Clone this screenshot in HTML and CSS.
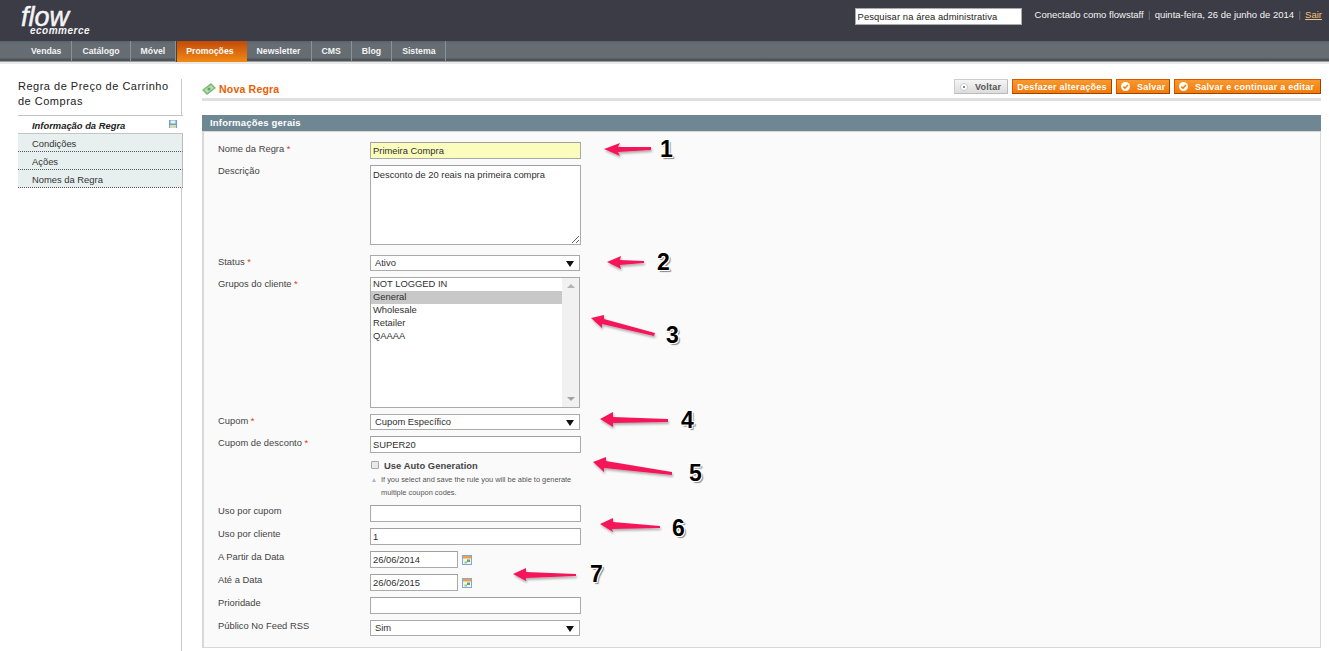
FILE: index.html
```html
<!DOCTYPE html>
<html lang="pt">
<head>
<meta charset="utf-8">
<title>Nova Regra</title>
<link rel="stylesheet" href="styles.css">
</head>
<body>
<header class="top">
  <div class="logo"><span class="logo-flow">flow</span><span class="logo-sub">ecommerce</span></div>
  <div class="top-right">
    <input class="search" type="text" value="Pesquisar na área administrativa">
    <div class="user">Conectado como flowstaff<i>|</i>quinta-feira, 26 de junho de 2014<i>|</i><a href="#">Sair</a></div>
  </div>
</header>
<nav class="nav">
  <a class="nav-item" href="#">Vendas</a>
  <a class="nav-item" href="#">Catálogo</a>
  <a class="nav-item" href="#">Móvel</a>
  <a class="nav-item active" href="#">Promoções</a>
  <a class="nav-item" href="#">Newsletter</a>
  <a class="nav-item" href="#">CMS</a>
  <a class="nav-item" href="#">Blog</a>
  <a class="nav-item" href="#">Sistema</a>
</nav>
<div class="page">
  <aside class="side">
    <h3 class="side-title">Regra de Preço de Carrinho de Compras</h3>
    <ul class="tabs">
      <li class="tab current">Informação da Regra
        <svg class="tab-icon" viewBox="0 0 8 8" width="8" height="8"><rect width="8" height="8" fill="#6f9fd8"/><rect x="1.5" y="0.5" width="5" height="3" fill="#e8f0f8"/><rect x="1" y="5" width="6" height="3" fill="#cfe0a8"/></svg>
      </li>
      <li class="tab">Condições</li>
      <li class="tab">Ações</li>
      <li class="tab">Nomes da Regra</li>
    </ul>
  </aside>
  <main class="main">
    <div class="head">
      <h3 class="head-title">
        <svg class="head-icon" viewBox="0 0 14 12" width="14" height="12"><path d="M0 7 9 0l5 5-9 7z" fill="#7fb77a"/><path d="M2 7 9 2l3 3-7 5z" fill="#b4dbab"/><circle cx="7" cy="6" r="1.5" fill="#6aa165"/></svg>
        Nova Regra
      </h3>
      <div class="actions">
        <button class="btn back" type="button"><span class="ico-back"></span>Voltar</button>
        <button class="btn plain" type="button">Desfazer alterações</button>
        <button class="btn save" type="button"><span class="ico-ok"><svg viewBox="0 0 9 9" width="9" height="9"><path d="M2.3 4.6 4 6.2 6.9 2.9" fill="none" stroke="#f18200" stroke-width="1.5"/></svg></span>Salvar</button>
        <button class="btn wide" type="button"><span class="ico-ok"><svg viewBox="0 0 9 9" width="9" height="9"><path d="M2.3 4.6 4 6.2 6.9 2.9" fill="none" stroke="#f18200" stroke-width="1.5"/></svg></span>Salvar e continuar a editar</button>
      </div>
    </div>
    <h4 class="sec-head">Informações gerais</h4>
    <form class="fieldset">
      <div class="row"><label class="must">Nome da Regra <b>*</b></label><input class="inp req" type="text" value="Primeira Compra"></div>
      <div class="row"><label>Descrição</label><textarea class="area">Desconto de 20 reais na primeira compra</textarea></div>
      <div class="row status"><label class="must">Status <b>*</b></label><div class="sel">Ativo</div></div>
      <div class="row"><label class="must">Grupos do cliente <b>*</b></label>
        <div class="multi">
          <ul class="opts">
            <li>NOT LOGGED IN</li>
            <li class="picked">General</li>
            <li>Wholesale</li>
            <li>Retailer</li>
            <li>QAAAA</li>
          </ul>
          <div class="scroll"><span class="up"></span><span class="down"></span></div>
        </div>
      </div>
      <div class="row"><label class="must">Cupom <b>*</b></label><div class="sel">Cupom Específico</div></div>
      <div class="row"><label class="must">Cupom de desconto <b>*</b></label><input class="inp" type="text" value="SUPER20"></div>
      <div class="auto">
        <div class="auto-check"><input class="chk" type="checkbox"><strong>Use Auto Generation</strong></div>
        <p class="note">If you select and save the rule you will be able to generate multiple coupon codes.</p>
      </div>
      <div class="row"><label>Uso por cupom</label><input class="inp" type="text"></div>
      <div class="row"><label>Uso por cliente</label><input class="inp" type="text" value="1"></div>
      <div class="row"><label>A Partir da Data</label><input class="inp date" type="text" value="26/06/2014">
        <svg class="cal" viewBox="0 0 10 10" width="10" height="10"><rect x=".5" y=".5" width="9" height="9" fill="#eef4fa" stroke="#7fa8d8"/><rect x="1" y="1" width="8" height="2.5" fill="#f0a040"/><rect x="5" y="4.5" width="3" height="2.5" fill="#6aa84f"/><rect x="2.5" y="6.5" width="2.5" height="2" fill="#9cc48a"/></svg>
      </div>
      <div class="row"><label>Até a Data</label><input class="inp date" type="text" value="26/06/2015">
        <svg class="cal" viewBox="0 0 10 10" width="10" height="10"><rect x=".5" y=".5" width="9" height="9" fill="#eef4fa" stroke="#7fa8d8"/><rect x="1" y="1" width="8" height="2.5" fill="#f0a040"/><rect x="5" y="4.5" width="3" height="2.5" fill="#6aa84f"/><rect x="2.5" y="6.5" width="2.5" height="2" fill="#9cc48a"/></svg>
      </div>
      <div class="row"><label>Prioridade</label><input class="inp" type="text"></div>
      <div class="row"><label>Público No Feed RSS</label><div class="sel">Sim</div></div>
    </form>
  </main>
</div>
<svg class="arrows" width="1329" height="651" viewBox="0 0 1329 651">
  <defs><filter id="sh" x="-20%" y="-50%" width="140%" height="200%"><feDropShadow dx="1" dy="2" stdDeviation="1" flood-color="#000" flood-opacity=".3"/></filter></defs>
  <g fill="#f5185a" filter="url(#sh)">
    <path d="M604 149 620 143 618 147 651 147 651 150 618 152 620 156z"/>
    <path d="M607 262 621 256 620 260 644 261 644 263 620 265 621 269z"/>
    <path d="M591 318 604 315 604 319 655 333 654 336 602 324 602 328z"/>
    <path d="M600 419 613 412 613 417 668 419 668 422 613 423 613 427z"/>
    <path d="M593 462 606 457 606 461 672 472 672 475 604 468 604 472z"/>
    <path d="M600 524 613 518 613 522 660 526 660 528 612 529 613 532z"/>
    <path d="M513 574 526 568 526 572 576 574 576 576 526 578 526 581z"/>
  </g>
</svg>
<span class="num n1">1</span>
<span class="num n2">2</span>
<span class="num n3">3</span>
<span class="num n4">4</span>
<span class="num n5">5</span>
<span class="num n6">6</span>
<span class="num n7">7</span>
</body>
</html>
```
FILE: styles.css
```css
* { box-sizing: border-box; }
html, body { margin: 0; padding: 0; overflow: hidden; }
body {
  position: relative;
  height: 651px;
  background: #fff;
  color: #2f2f2f;
  font-family: "Liberation Sans", Arial, sans-serif;
  font-size: 9.4px;
}
ul { list-style: none; margin: 0; padding: 0; }
h3, h4, p { margin: 0; }

.top {
  height: 41px;
  background: #3b3c46;
  display: flex;
  justify-content: space-between;
  padding-left: 21px;
  padding-right: 7px;
}
.logo { display: flex; flex-direction: column; width: 70px; color: #f4f4f4; font-style: italic; }
.logo-flow { height: 20px; font-size: 27px; line-height: 20px; margin-top: 7px; -webkit-text-stroke: .5px #f4f4f4; }
.logo-sub { font-size: 10px; line-height: 8px; font-weight: bold; margin-left: 9px; letter-spacing: .5px; white-space: nowrap; }
.top-right { display: flex; align-items: flex-start; padding-top: 8px; }
.search {
  width: 167px; height: 17px; margin-right: 13px; padding: 0 2px;
  border: 1px solid #aaa; background: #fff; color: #222;
  font: 9.4px "Liberation Sans", Arial, sans-serif; letter-spacing: .1px;
}
.user { color: #f4f4f4; font-size: 9.5px; line-height: 14px; white-space: nowrap; }
.user i { font-style: normal; color: #777; margin: 0 4.25px; }
.user a { color: #f2c27e; text-decoration: underline; }

.nav {
  height: 23px;
  display: flex;
  padding-left: 21px;
  background: linear-gradient(#56646b 0, #666d73 3px, #656c72 17px, #4f5559 18px, #4b5054 20px, #e9e9e9 21px);
}
.nav-item {
  height: 21px; padding: 0 10px; line-height: 20px;
  color: #f4f4f4; font-weight: bold; font-size: 8.7px; text-decoration: none;
  border-right: 1px solid #8b9296;
}
.nav-item.active {
  padding: 0 13px 0 9px; color: #fff; border-right: 0;
  border-left: 1px solid #4a4038;
  background: linear-gradient(#c24a0a, #f18a14);
}

.page { display: flex; height: 587px; padding-left: 18px; padding-top: 15px; }
.side { width: 165px; margin-right: 19px; position: relative; }
.side-title {
  width: 164px; height: 36px; padding-right: 8px;
  border-right: 1px solid #c8c8c8;
  font-size: 11px; line-height: 15px; font-weight: normal; color: #222; letter-spacing: .5px;
}
.side::after { content: ""; position: absolute; left: 163px; top: 109px; bottom: 0; width: 1px; background: #c8c8c8; }
.tabs { border-top: 1px solid #c4c4c4; }
.tab {
  position: relative; height: 18px; padding-left: 14px; line-height: 19px;
  background: #e7efef; border-right: 1px solid #bbb; border-bottom: 1px dotted #555; color: #333;
}
.tab.current {
  background: #fff; font-weight: bold; font-style: italic; color: #222;
  border-right: 0; border-bottom: 1px solid #c4c4c4;
}
.tab-icon { position: absolute; left: 151px; top: 4px; }

.main { width: 1119px; }
.head { height: 22px; border-bottom: 3px solid #dfdfdf; display: flex; justify-content: space-between; }
.head-title { display: flex; align-items: center; height: 19px; gap: 3px; color: #eb5e00; font-size: 10.5px; letter-spacing: .2px; }
.actions { display: flex; gap: 4px; }
.btn {
  height: 15px; padding: 0 4px; display: flex; align-items: center; white-space: nowrap;
  border: 1px solid #de5400; border-right-color: #a04300; border-bottom-color: #a04300;
  background: linear-gradient(#f79a30, #f47a08);
  color: #fff; font: bold 9px "Liberation Sans", Arial, sans-serif; letter-spacing: .25px;
}
.btn.back { width: 54px; padding-left: 5px; background: linear-gradient(#f5f5f5, #dcdcdc); border-color: #ccc #bbb #bbb #ccc; color: #555; }
.btn.plain { width: 100px; justify-content: center; }
.btn.save { width: 54px; }
.btn.wide { width: 147px; }
.ico-back { width: 8px; height: 8px; margin-right: 7px; border: 1px solid #ccc; border-radius: 50%; background: radial-gradient(#888 25%, #fff 35%); }
.ico-ok { width: 9px; height: 9px; margin-right: 7px; border-radius: 50%; background: #fff; display: block; line-height: 0; }

.sec-head {
  margin-top: 14px; height: 16px; padding-left: 8px; line-height: 15px;
  background: #6f8792; color: #fff; font-size: 9.5px; letter-spacing: .2px;
}
.fieldset {
  height: 517px; padding: 10px 0 0 14px;
  background: #fafafa; border: 1px solid #d8d8d8; border-left-width: 2px;
  display: flex; flex-direction: column; gap: 6px;
}
.row { display: flex; align-items: flex-start; }
.row.status { margin-top: 4px; }
.row label { width: 152px; line-height: 12px; color: #444; }
.row label.must { padding-top: 1px; }
.row label b { color: #eb340a; font-weight: normal; }

.inp, .area {
  width: 211px; padding: 0 2px; background: #fff; color: #2f2f2f;
  border: 1px solid #aaa; border-top-color: #a0a0a0;
  font: 9.4px "Liberation Sans", Arial, sans-serif;
}
.inp { height: 17px; }
.inp.req { background: #fafdbb; }
.inp.date { width: 88px; }
.area { display: block; height: 80px; padding: 2px; line-height: 13px; }
.sel {
  position: relative; width: 210px; height: 16px; padding: 0 4px; line-height: 14px;
  background: #fff; border: 1px solid #aaa; color: #2f2f2f;
}
.sel::after {
  content: ""; position: absolute; right: 5px; top: 5px;
  border: 4px solid transparent; border-top: 6px solid #111; border-bottom: 0;
}
.multi { display: flex; width: 210px; height: 131px; background: #fff; border: 1px solid #aaa; }
.opts { flex: 1; color: #2f2f2f; }
.opts li { padding-left: 2px; height: 13px; line-height: 12px; }
.opts .picked { background: #c8c8c8; }
.scroll { position: relative; width: 17px; background: #f1f1f1; }
.up, .down { position: absolute; left: 5px; border: 4px solid transparent; border-top: 0; }
.up { top: 6px; border-bottom: 4px solid #b3b3b3; }
.down { bottom: 6px; border: 4px solid transparent; border-bottom: 0; border-top: 4px solid #a3a3a3; }

.cal { margin: 4px 0 0 4px; }
.auto { margin: -2px 0 0 152px; width: 225px; }
.auto-check { display: flex; align-items: center; height: 16px; color: #444; letter-spacing: .05px; }
.chk {
  appearance: none; width: 8px; height: 8px; margin: 0 5px 0 1px;
  background: #e9e9e9; border: 1px solid #a8a8a8; border-radius: 1px;
}
.note { position: relative; padding-left: 11px; font-size: 7.4px; line-height: 13px; color: #555; }
.note::before {
  content: ""; position: absolute; left: 2px; top: 5px;
  border: 2.5px solid transparent; border-top: 0; border-bottom: 4px solid #a9bcc5;
}

.arrows { position: absolute; left: 0; top: 0; pointer-events: none; }
.num {
  position: absolute; font-size: 23px; line-height: 26px; font-weight: bold; color: #000;
  text-shadow: 1px 1px 0 #fff, -1px -1px 0 #fff, 1px -1px 0 #fff, -1px 1px 0 #fff, 2px 2px 1px #888;
}
.n1 { left: 660px; top: 136px; }
.n2 { left: 657px; top: 249px; }
.n3 { left: 666px; top: 322px; }
.n4 { left: 681px; top: 407px; }
.n5 { left: 689px; top: 460px; }
.n6 { left: 672px; top: 515px; }
.n7 { left: 590px; top: 561px; }
```
